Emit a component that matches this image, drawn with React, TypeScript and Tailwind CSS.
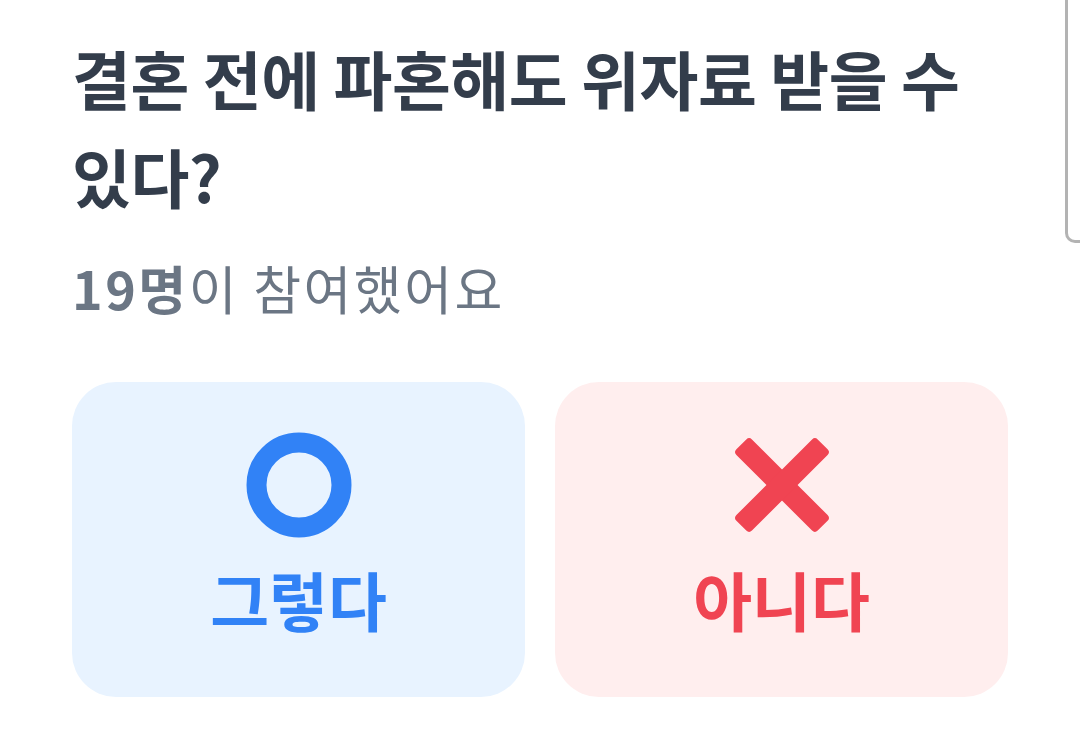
export default function App() {
  return (
    <div
      className="relative h-[746px] w-[1080px] overflow-hidden bg-white"
      style={{ fontFamily: '"Noto Sans CJK KR", "Noto Sans", sans-serif' }}
    >
      {/* edge of the sheet behind, top right */}
      <div className="absolute right-0 top-0 h-[243px] w-[15px] rounded-bl-[10px] border-b-[3px] border-l-[3px] border-[#b3b3b3]" />

      <div className="px-[72px] pt-[28px]">
        <h1 className="text-[64px] font-bold leading-[98px] tracking-[-0.5px] text-[#333d4b]">
          결혼 전에 파혼해도 위자료 받을 수 있다?
        </h1>
        <p className="mt-[32px] text-[52px] leading-[64px] tracking-[2.5px] text-[#6b7684]">
          <span className="font-bold">19명</span>이 참여했어요
        </p>

        <div className="mt-[62px] grid grid-cols-2 gap-[30px]">
          <VoteButton
            label="그렇다"
            bg="bg-[#e8f3ff]"
            fg="text-[#3182f6]"
            icon={<CircleMark />}
          />
          <VoteButton
            label="아니다"
            bg="bg-[#ffeeee]"
            fg="text-[#f04452]"
            icon={<CrossMark />}
          />
        </div>
      </div>
    </div>
  );
}

function VoteButton({
  label,
  bg,
  fg,
  icon,
}: {
  label: string;
  bg: string;
  fg: string;
  icon: React.ReactNode;
}) {
  return (
    <button
      className={`flex h-[315px] w-[453px] flex-col items-center pt-[50px] rounded-[44px] ${bg}`}
    >
      {icon}
      <span className={`mt-[28px] text-[64px] font-bold leading-[64px] ${fg}`}>
        {label}
      </span>
    </button>
  );
}

function CircleMark() {
  return (
    <svg width="106" height="106" viewBox="0 0 106 106">
      <circle cx="53" cy="53" r="42.5" fill="none" stroke="#3182f6" strokeWidth="20" />
    </svg>
  );
}

function CrossMark() {
  return (
    <svg width="106" height="106" viewBox="0 0 106 106">
      <g transform="rotate(45 53 53)" fill="#f04452">
        <rect x="-4.5" y="42" width="115" height="22" rx="4" />
        <rect x="42" y="-4.5" width="22" height="115" rx="4" />
      </g>
    </svg>
  );
}
